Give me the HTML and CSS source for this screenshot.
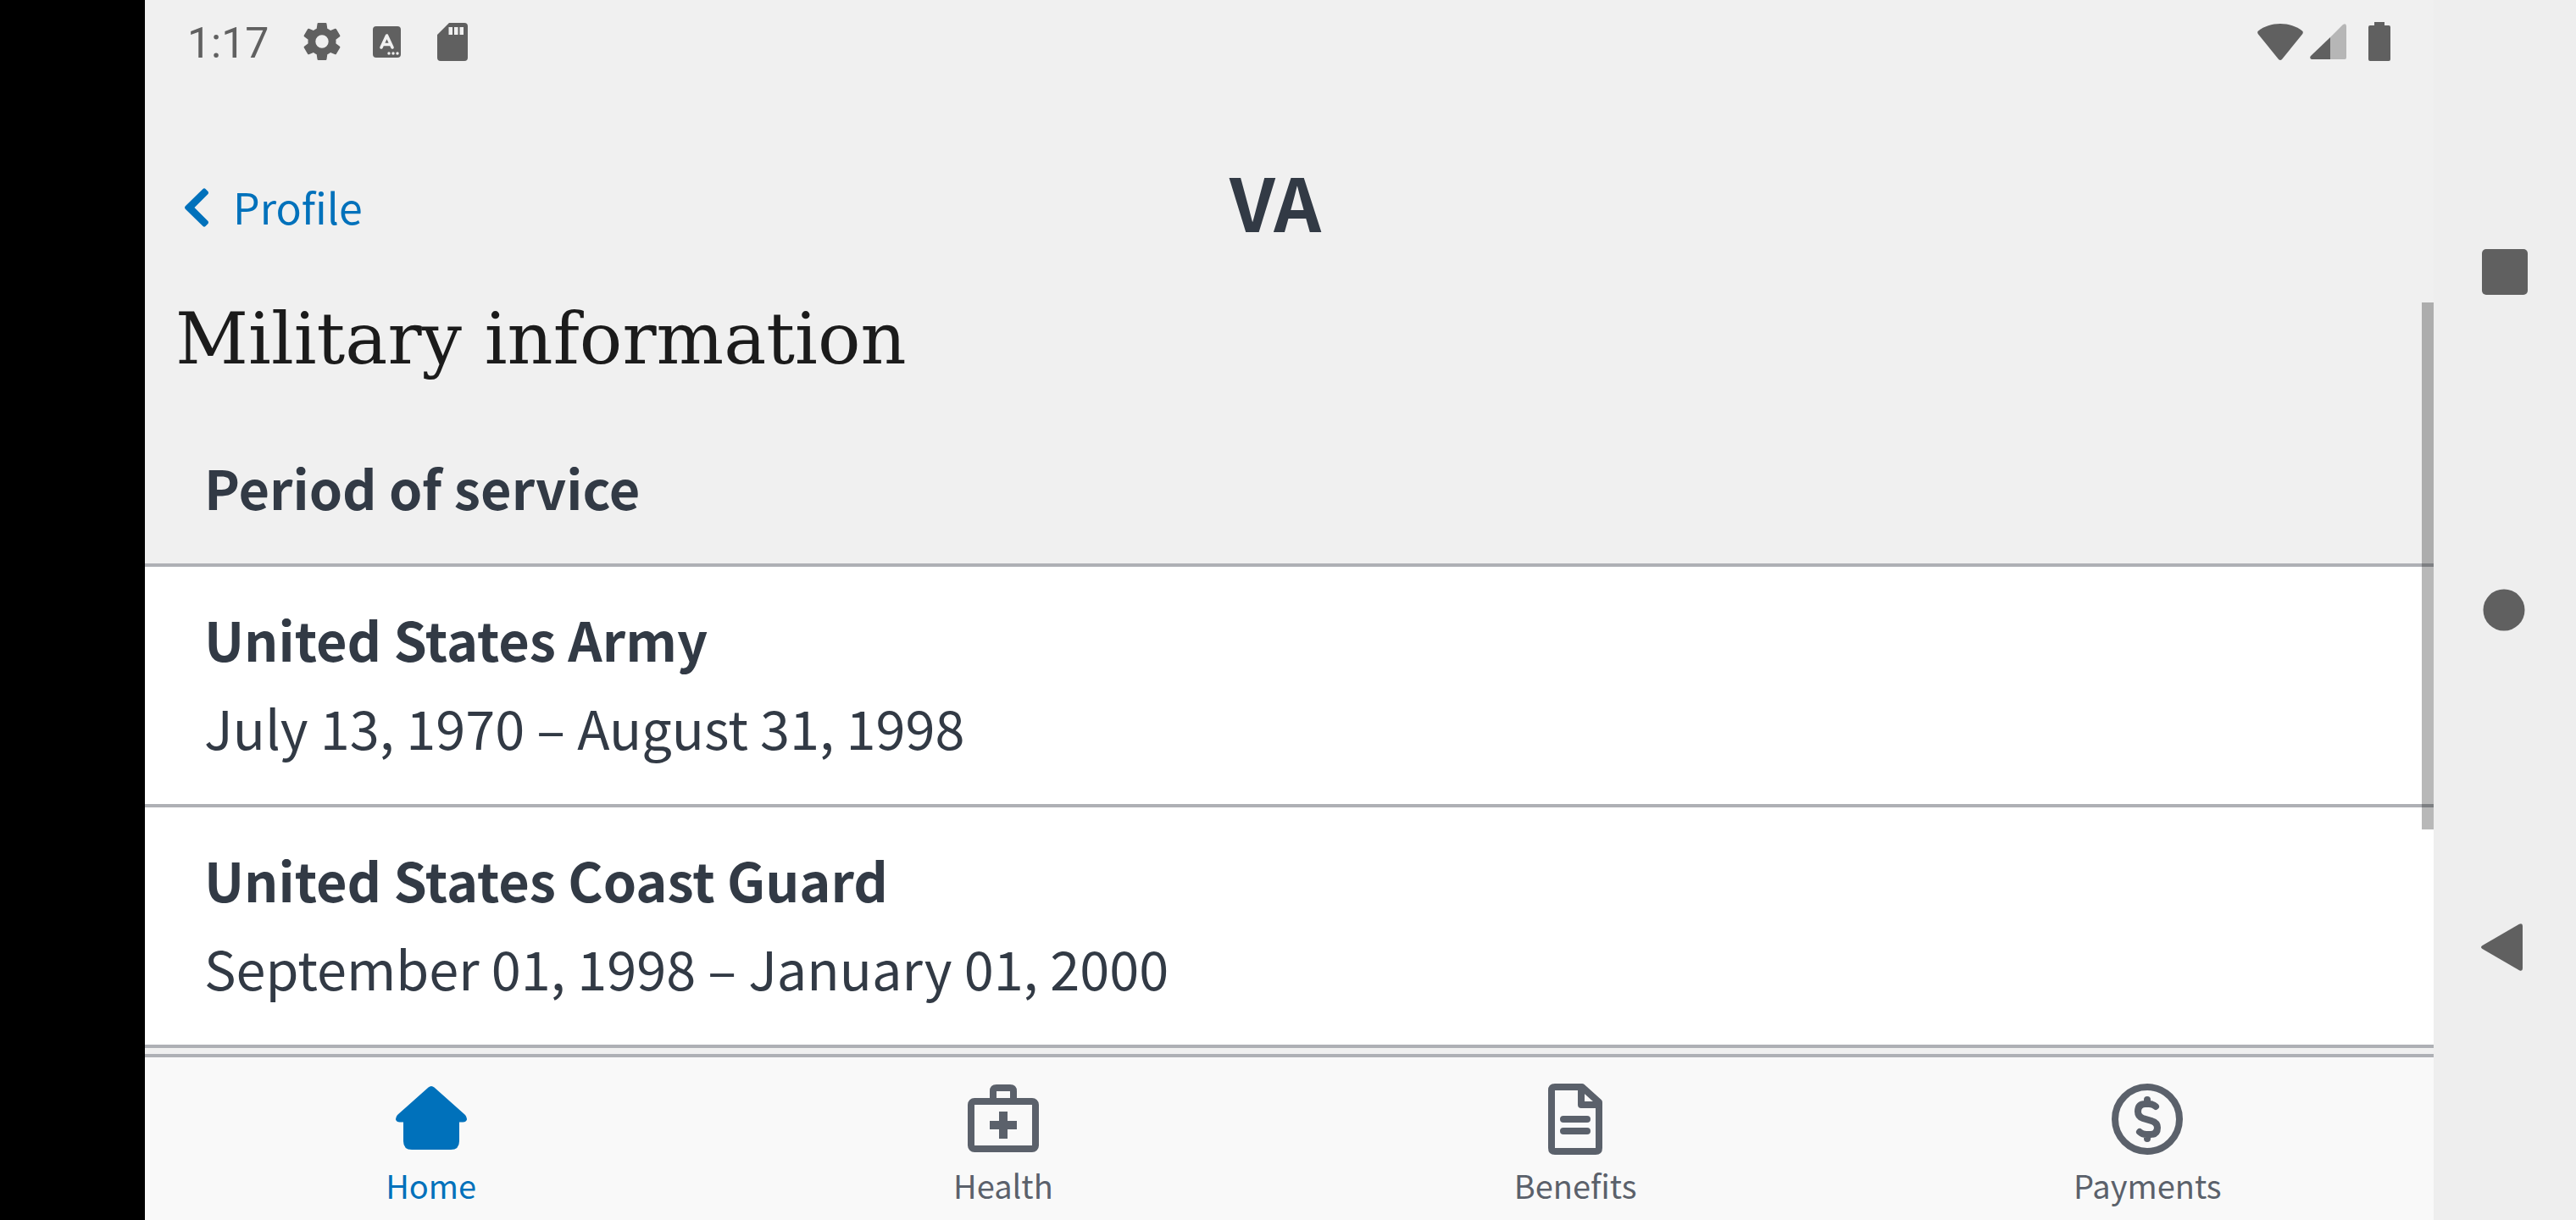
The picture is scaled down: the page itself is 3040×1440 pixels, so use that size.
FILE: index.html
```html
<!DOCTYPE html>
<html lang="en">
<head>
<meta charset="utf-8">
<title>Military information</title>
<link rel="stylesheet" href="styles.css">
</head>
<body>
<div class="device">
  <div class="app">
    <div class="status">
      <span class="time">1:17</span>
      <svg class="status-icon gear" viewBox="2 2 20 20" aria-hidden="true"><path d="M19.43 12.98c.04-.32.07-.64.07-.98s-.03-.66-.07-.98l2.11-1.65c.19-.15.24-.42.12-.64l-2-3.46c-.12-.22-.39-.3-.61-.22l-2.49 1c-.52-.4-1.08-.73-1.69-.98l-.38-2.65A.49.49 0 0 0 14 2h-4c-.25 0-.46.18-.49.42l-.38 2.65c-.61.25-1.17.59-1.69.98l-2.49-1c-.23-.09-.49 0-.61.22l-2 3.46c-.13.22-.07.49.12.64l2.11 1.65c-.04.32-.07.65-.07.98s.03.66.07.98l-2.11 1.65c-.19.15-.24.42-.12.64l2 3.46c.12.22.39.3.61.22l2.49-1c.52.4 1.08.73 1.69.98l.38 2.65c.03.24.24.42.49.42h4c.25 0 .46-.18.49-.42l.38-2.65c.61-.25 1.17-.59 1.69-.98l2.49 1c.23.09.49 0 .61-.22l2-3.46c.12-.22.07-.49-.12-.64l-2.11-1.65zM12 15.500a3.500 3.500 0 1 1 0-7 3.500 3.500 0 0 1 0 7z"/></svg>
      <svg class="status-icon keyboard" viewBox="0 0 33 37" aria-hidden="true"><rect width="33" height="37" rx="4"/><path d="M10 25 16.500 11 23 25M12 21.500h9" fill="none" stroke="#f0f0f0" stroke-width="3.600" stroke-linecap="round" stroke-linejoin="round"/><g fill="#f0f0f0"><circle cx="19" cy="32" r="1.700"/><circle cx="24" cy="32" r="1.700"/><circle cx="29" cy="32" r="1.700"/></g></svg>
      <svg class="status-icon card" viewBox="0 0 36 45" aria-hidden="true"><path fill-rule="evenodd" d="M14 0h18a4 4 0 0 1 4 4v37a4 4 0 0 1-4 4H4a4 4 0 0 1-4-4V14zM13.500 5v9h4.500V5zM20 5v9h4.500V5zM26.500 5v9H31V5z"/></svg>
      <svg class="status-icon wifi" viewBox="0 0 54 43" aria-hidden="true"><path d="M1 8.500C8 3 17 0 27 0s19 3 26 8.500q1.500 1.500.3 3.500L29 42q-2 2-4 0L.7 12Q-.5 10 1 8.500z"/></svg>
      <svg class="status-icon signal" viewBox="0 0 43 43" aria-hidden="true"><path fill="#b6b6b6" d="M24 16 39 1q4-2 4 2v37q0 2-2 2H24z"/><path d="M24 16v26H2q-3-1-1-4z"/></svg>
      <svg class="status-icon battery" viewBox="0 0 26 46" aria-hidden="true"><path d="M7 0h12v4h5q2 0 2 2v38q0 2-2 2H2q-2 0-2-2V6q0-2 2-2h5z"/></svg>
    </div>
    <header class="topbar">
      <a class="back" href="#profile">
        <svg class="chevron" viewBox="0 0 28 46" aria-hidden="true"><path d="M21.500 1q1.500-1.500 3 0l3 3q1 1.500 0 3L11.500 23l16 16q1 1.500 0 3l-3 3q-1.500 1.500-3 0L1 25q-2-2 0-4z" fill="currentColor"/></svg>
        <span class="back-label">Profile</span>
      </a>
      <span class="logo">VA</span>
    </header>
    <main class="content">
      <h1 class="title">Military information</h1>
      <h2 class="section">Period of service</h2>
      <ul class="list">
        <li class="row"><strong>United States Army</strong><span>July 13, 1970 – August 31, 1998</span></li>
        <li class="row"><strong>United States Coast Guard</strong><span>September 01, 1998 – January 01, 2000</span></li>
      </ul>
      <div class="scrollbar"></div>
    </main>
    <nav class="tabs">
      <a class="tab active" href="#home">
        <svg class="tab-icon" viewBox="0 0 84 84" aria-hidden="true"><path d="M38.500 4.500q3.500-3 7 0L82 37q3 4 1.500 6.500-1 2-4 2H75V68q0 10-10 10H19q-10 0-10-10V45.500H4.500q-3 0-4-2Q-1 41 2 37z"/></svg>
        Home
      </a>
      <a class="tab" href="#health">
        <svg class="tab-icon" viewBox="0 0 84 84" aria-hidden="true"><g fill="none" stroke="currentColor" stroke-width="8"><rect x="4" y="21" width="76" height="56" rx="4"/><path d="M30 21V9q0-4 4-4h16q4 0 4 4v12"/></g><path d="M37 33h10v11h11v10H47v11H37V54H26V44h11z"/></svg>
        Health
      </a>
      <a class="tab" href="#benefits">
        <svg class="tab-icon" viewBox="0 0 84 84" aria-hidden="true"><g fill="none" stroke="currentColor" stroke-width="8" stroke-linejoin="round"><path d="M18 4h32l20 18v54q0 4-4 4H18q-4 0-4-4V8q0-4 4-4z"/><path d="M49 5v20h21M28 42h28M28 56h28" stroke-linecap="round"/></g></svg>
        Benefits
      </a>
      <a class="tab" href="#payments">
        <svg class="tab-icon" viewBox="0 0 84 84" aria-hidden="true"><g fill="none" stroke="currentColor" stroke-width="8" stroke-linecap="round" stroke-linejoin="round"><circle cx="42" cy="42" r="38"/><path d="M42 19v5M42 60v5M52 27q-3-3-8-3h-4q-9 0-9 9 0 6 6 8l10 3q7 2 7 8 0 8-8 8h-5q-5 0-8-3"/></g></svg>
        Payments
      </a>
    </nav>
  </div>
  <div class="system">
    <button class="key" aria-label="Recent apps"><svg viewBox="0 0 56 56"><rect x="1" y="1" width="54" height="54" rx="5"/></svg></button>
    <button class="key" aria-label="Home screen"><svg viewBox="0 0 56 56"><circle cx="27" cy="28" r="24.500"/></svg></button>
    <button class="key" aria-label="Back"><svg viewBox="0 0 56 56"><path d="M1.500 26 45 .8q4-1.800 4 2.200v50q0 4-4 2.200L1.500 30q-3-2 0-4z"/></svg></button>
  </div>
</div>
</body>
</html>
```
FILE: styles.css
```css
* { box-sizing: border-box; }

body {
  margin: 0;
  background: #000;
  color: #323a45;
  font-family: "Noto Sans CJK SC", "Open Sans", sans-serif;
}

.device {
  display: grid;
  grid-template-columns: 171px minmax(0, 1fr) 168px;
  height: 100vh;
}

.app {
  grid-column: 2;
  display: flex;
  flex-direction: column;
  min-height: 0;
  background: #f0f0f0;
}

.status {
  display: flex;
  align-items: center;
  flex: none;
  height: 98px;
  padding: 0 51px 0 50px;
  color: #606060;
  fill: #606060;
}

.time {
  margin-right: 41px;
  padding-top: 4px;
  font: 50px/94px Roboto, sans-serif;
}

.status-icon { flex: none; }
.gear { width: 44px; height: 44px; margin-right: 38px; }
.keyboard { width: 33px; height: 37px; margin-right: 43px; }
.card { width: 36px; height: 45px; }
.wifi { width: 54px; height: 43px; margin-left: auto; margin-right: 8px; }
.signal { width: 43px; height: 43px; margin-right: 26px; }
.battery { width: 26px; height: 46px; }

.topbar {
  display: grid;
  grid-template-columns: 1fr auto 1fr;
  align-items: center;
  flex: none;
  height: 198px;
  margin-top: 48px;
  padding: 0 80px 0 47px;
}

.back {
  display: flex;
  align-items: center;
  gap: 29px;
  color: #0071bb;
  font-size: 50px;
  line-height: 70px;
  text-decoration: none;
}

.chevron { width: 28px; height: 46px; }
.back-label { padding-bottom: 5px; }

.logo {
  padding-bottom: 18px;
  font-size: 87px;
  font-weight: 700;
  line-height: 96px;
}

.content {
  position: relative;
  flex: 1;
  min-height: 0;
  overflow: hidden;
}

.title {
  margin: 0;
  padding: 0 36px;
  color: #1b1b1b;
  font: 400 84px/112px "DejaVu Serif", serif;
}

.section {
  margin: 0;
  padding: 67px 70px 38px;
  font-size: 63px;
  line-height: 104px;
}

.list {
  margin: 0;
  padding: 0;
  border-top: 4px solid #aeb0b5;
  list-style: none;
}

.row {
  display: flex;
  flex-direction: column;
  padding: 33px 70px 39px;
  border-bottom: 4px solid #aeb0b5;
  background: #fff;
  font-size: 63px;
  line-height: 104px;
}

.scrollbar {
  position: absolute;
  top: 13px;
  right: 0;
  width: 14px;
  height: 622px;
  background: rgba(0, 0, 0, 0.28);
}

.tabs {
  display: grid;
  grid-template-columns: repeat(4, 1fr);
  flex: none;
  height: 196px;
  border-top: 4px solid #aeb0b5;
  background: #f9f9f9;
}

.tab {
  display: flex;
  flex-direction: column;
  align-items: center;
  gap: 8px;
  padding-top: 31px;
  color: #5b616b;
  fill: currentColor;
  font-size: 38px;
  line-height: 56px;
  text-decoration: none;
}

.active { color: #0071bb; }
.tab-icon { width: 84px; height: 84px; }

.system {
  display: flex;
  flex-direction: column;
  align-items: center;
  justify-content: space-between;
  padding: 293px 0 294px;
  background: #eee;
}

.key {
  display: flex;
  padding: 0;
  border: 0;
  background: none;
  fill: #606060;
}

.key svg { width: 56px; height: 56px; }
```
